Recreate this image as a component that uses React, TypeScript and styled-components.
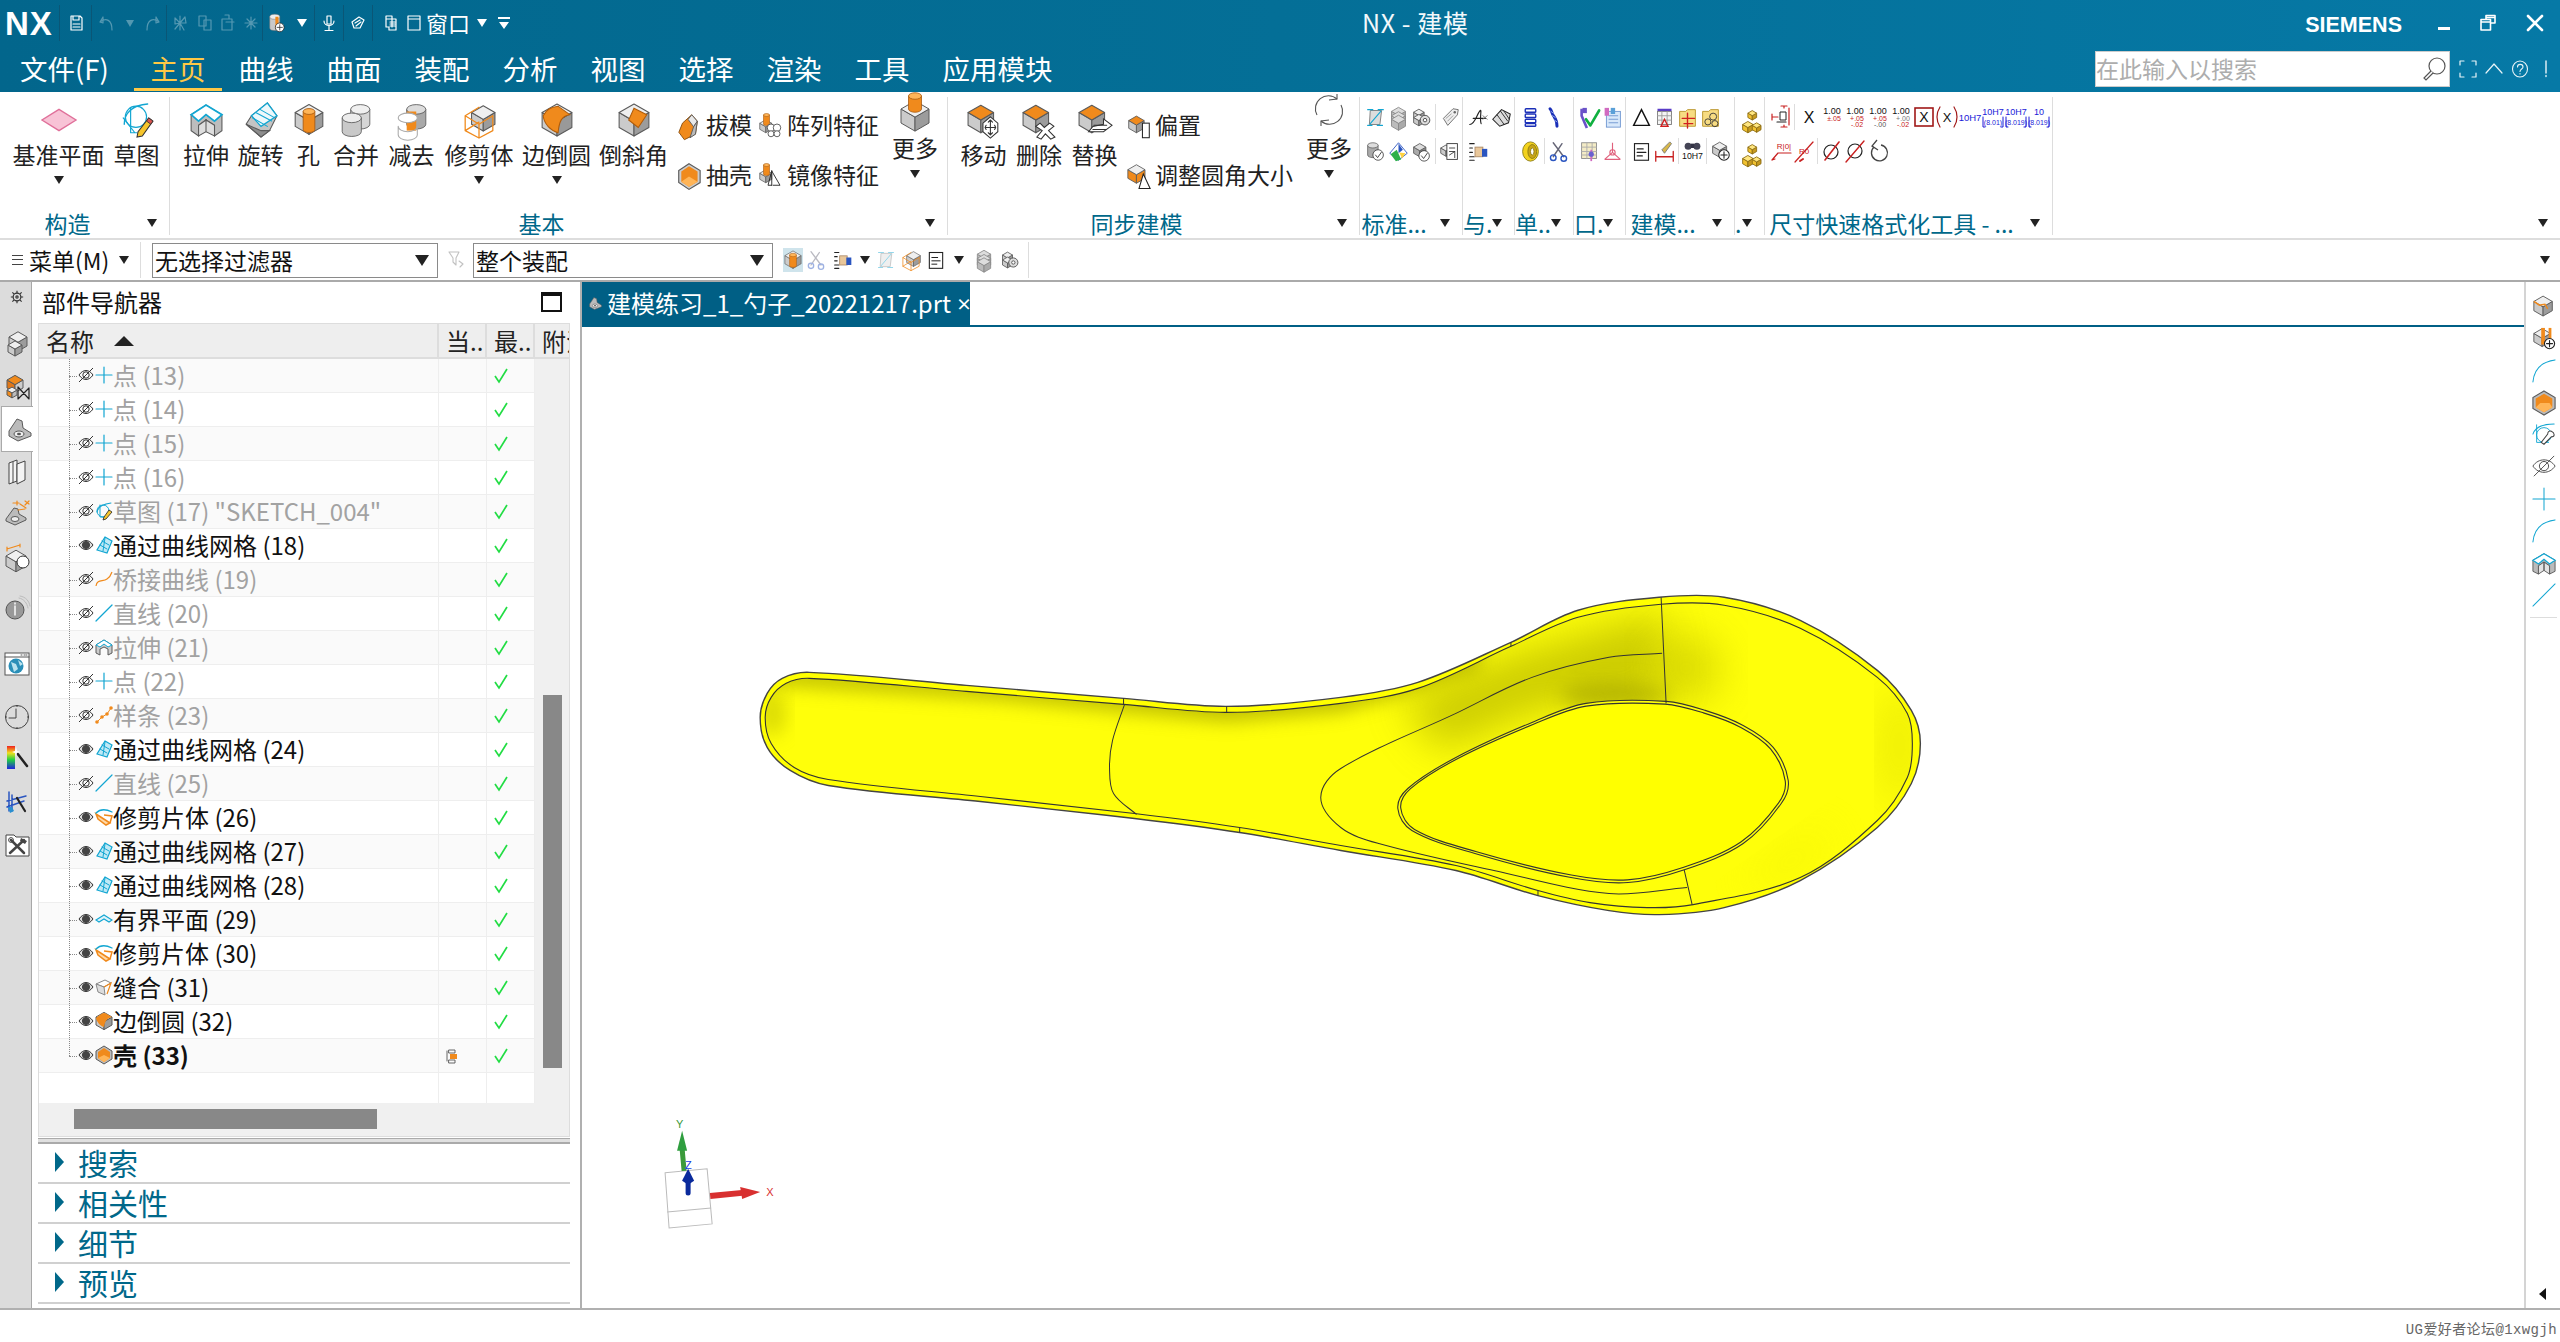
import React from 'react';
import styled, { createGlobalStyle } from 'styled-components';

const CJK = `"Noto Sans CJK SC", "Noto Sans", sans-serif`;
const TEAL = '#00688a';

const Global = createGlobalStyle`
  html, body { margin: 0; padding: 0; background: #fff; overflow: hidden; }
  body { font-family: ${CJK}; }
  * { box-sizing: border-box; }
`;

/* ---------- drawing helpers ---------- */
const O = '#f08a1c', OL = '#ffb558', G1 = '#efefef', G2 = '#cbcbcb', G3 = '#9c9c9c', ST = '#5a5a5a', CY = '#12a6d2';

const cube = (cx: number, cy: number, r: number, t = G1, l = G2, rt = G3, st = ST) => {
  const h = r * 0.58, b = r;
  return (
    <g stroke={st} strokeWidth={1} strokeLinejoin="round">
      <polygon points={`${cx - r},${cy} ${cx},${cy + h} ${cx},${cy + h + b} ${cx - r},${cy + b}`} fill={l} />
      <polygon points={`${cx + r},${cy} ${cx},${cy + h} ${cx},${cy + h + b} ${cx + r},${cy + b}`} fill={rt} />
      <polygon points={`${cx},${cy - h} ${cx + r},${cy} ${cx},${cy + h} ${cx - r},${cy}`} fill={t} />
    </g>
  );
};
const cyl = (cx: number, top: number, bot: number, rx: number, fill = O, cap = OL, st = '#a85a10') => (
  <g stroke={st} strokeWidth={0.8}>
    <path d={`M${cx - rx} ${top} V${bot} A${rx} ${rx * 0.5} 0 0 0 ${cx + rx} ${bot} V${top}Z`} fill={fill} />
    <ellipse cx={cx} cy={top} rx={rx} ry={rx * 0.5} fill={cap} />
  </g>
);
const line = (d: string, c = ST, w = 1) => <path d={d} fill="none" stroke={c} strokeWidth={w} strokeLinecap="round" strokeLinejoin="round" />;
const pencil = (
  <g>
    <polygon points="27,14 31,17 21,31 16,32 17,27" fill="#f6c52c" stroke="#333" strokeWidth={1} />
    <polygon points="27,14 31,17 29,20 25,17" fill="#d9534f" stroke="#333" strokeWidth={0.8} />
  </g>
);
const plus = (cx: number, cy: number, r: number) => (
  <g>
    <circle cx={cx} cy={cy} r={r} fill="#fff" stroke="#222" strokeWidth={1.2} />
    {line(`M${cx - r * 0.6} ${cy}H${cx + r * 0.6}M${cx} ${cy - r * 0.6}V${cy + r * 0.6}`, '#222', 1.2)}
  </g>
);
const check = (cx: number, cy: number, r: number) => (
  <g>
    <circle cx={cx} cy={cy} r={r} fill="#fff" stroke="#333" strokeWidth={0.9} />
    {line(`M${cx - r * 0.5} ${cy}L${cx - r * 0.1} ${cy + r * 0.5}L${cx + r * 0.6} ${cy - r * 0.5}`, '#333', 1)}
  </g>
);
const gold = (
  <g>
    {cube(9, 20, 6, '#ffe680', '#f2c230', '#c79a20', '#8a6a10')}
    {cube(19, 21, 5, '#ffe680', '#f2c230', '#c79a20', '#8a6a10')}
    {cube(14, 7, 5, '#ffe680', '#f2c230', '#c79a20', '#8a6a10')}
  </g>
);
const folder = (extra: React.ReactNode) => (
  <g>
    <path d="M3 5H10L12 3H21V22H3Z" fill="#f7dc82" stroke="#b58f20" />
    {extra}
  </g>
);
const dimText = (a: string, b: string, c: string, d?: string, e?: string) => (
  <g fontFamily="Liberation Sans, sans-serif" fontSize={8} textAnchor="middle">
    <text x={12} y={9} fill="#111" fontSize={9}>{a}</text>
    <text x={14} y={16} fill={c} fontSize={7}>{b}</text>
    {d && <text x={14} y={22} fill={e || c} fontSize={7}>{d}</text>}
  </g>
);
const blueText = (a: string, b: string) => (
  <g fontFamily="Liberation Sans, sans-serif" textAnchor="middle" fill="#1a1ad8">
    <text x={12} y={10} fontSize={9}>{a}</text>
    <text x={12} y={20} fontSize={7}>{b}</text>
    {line('M2 12V22H4M22 12V22H20', '#1a1ad8', 1)}
  </g>
);

/* large icons, 32 box */
const L: Record<string, React.ReactNode> = {
  datum: <polygon points="16,6 32,16 16,26 0,16" fill="#f8c3d6" stroke="#e0709a" strokeWidth={1.3} />,
  sketch: (
    <g>
      {line('M4 20C4 9 12 2 26 1', CY, 1.3)}
      <circle cx={15} cy={13} r={10} fill="none" stroke={CY} strokeWidth={1.1} />
      {line('M3 14L14 28M10 5V28H16', CY, 1.1)}
      {pencil}
    </g>
  ),
  extrude: (
    <g stroke={ST}>
      <path d="M2 11L16 2L31 11V26L24 31V21L16 16L9 21V31L2 26Z" fill="#bdbdbd" />
      <path d="M9 21V31L16 27V16ZM24 21V31L16 27V16Z" fill="#dedede" />
      <path d="M2 11L16 2L31 11L24 17L16 11L9 17Z" fill="#fff" stroke={CY} strokeWidth={1.6} />
    </g>
  ),
  revolve: (
    <g>
      <path d="M7 12L22 0L31 12L24 26L16 32L2 20Z" fill="#c4c4c4" stroke={ST} />
      <path d="M7 12L22 0L31 12L16 22Z" fill="#eef8fb" stroke={CY} strokeWidth={1.2} />
      {line('M11 9L26 17M15 6L29 14M8 14L22 22', CY, 1)}
      <path d="M2 20L16 26L24 26L16 32Z" fill="#8d8d8d" stroke={ST} />
    </g>
  ),
  hole: <g>{cube(16, 9, 13)}{cyl(16, 8, 25, 5.5)}</g>,
  unite: (
    <g>
      {cyl(20, 6, 20, 9, '#d5d5d5', '#f0f0f0', ST)}
      {cyl(12, 14, 27, 9, '#c9c9c9', '#ececec', ST)}
    </g>
  ),
  subtract: (
    <g>
      {cyl(20, 6, 20, 9, '#a9a9a9', '#dcdcdc', ST)}
      <path d="M11 8H20V26H11Z" fill={O} />
      {line('M3 22A9 5 0 0 0 21 22V30A9 5 0 0 1 3 30Z', '#aaa', 1)}
      <ellipse cx={12} cy={14} rx={9} ry={4.5} fill="#fff" stroke="#aaa" />
    </g>
  ),
  trim: (
    <g>
      {cube(20, 9, 11)}
      {line('M16 4L3 12L16 20L29 12M3 12V26L16 33L29 26V12M16 20V33M3 26L16 18', O, 1.2)}
    </g>
  ),
  blend: (
    <g>
      {cube(16, 9, 14, G1, '#ccc', '#999')}
      <path d="M3 12C6 6 10 4 17 3L28 11C20 12 18 18 17 28C10 26 4 20 3 12Z" fill={O} stroke="#b05c0a" />
    </g>
  ),
  chamfer: (
    <g>
      {cube(16, 9, 14)}
      <polygon points="16,5 28,11 20,23 11,16" fill={O} stroke="#b05c0a" />
    </g>
  ),
  draftS: (
    <g>
      <polygon points="6,12 16,3 22,10 20,24 8,30 2,22" fill={O} stroke="#8a4f10" />
      <polygon points="12,8 16,3 22,10 18,16" fill="#e8e8e8" stroke={ST} />
      <polygon points="18,16 22,10 20,24 14,28" fill="#bbb" stroke={ST} />
    </g>
  ),
  patternS: (
    <g>
      {cube(9, 15, 8)}
      {cyl(10, 4, 16, 4)}
      <g fill="#fff" stroke="#444" strokeWidth={1.1}>
        <circle cx={16} cy={21} r={5} /><circle cx={24} cy={21} r={5} /><circle cx={16} cy={29} r={4} /><circle cx={24} cy={29} r={4} />
      </g>
    </g>
  ),
  shellS: (
    <g>
      <polygon points="14,2 27,10 27,24 14,32 2,24 2,10" fill="#ccc" stroke={ST} strokeWidth={1.3} />
      <polygon points="14,5 24,11 24,23 14,29 5,23 5,11" fill={O} />
      <polygon points="5,23 14,17 24,23 14,29" fill={OL} />
    </g>
  ),
  mirrorS: (
    <g>
      {cube(9, 15, 8)}
      {cyl(10, 4, 16, 4)}
      {line('M17 12V31M17 12L12 31H17M17 12L28 31H19', '#222', 1.2)}
    </g>
  ),
  more: <g>{cube(16, 15, 14)}{cyl(16, 2, 15, 6.5)}</g>,
  move: (
    <g>
      {cube(13, 9, 12, O, G2, G3)}
      <g transform="translate(22 23)">
        <polygon points="0,-10 7,-4 7,4 0,10 -7,4 -7,-4" fill="#fff" stroke="#333" />
        {line('M0 -7V7M-5 0H5M-2 -5L0 -7L2 -5M-2 5L0 7L2 5M-4 -2L-5 0L-4 2M4 -2L5 0L4 2', '#333', 1)}
      </g>
    </g>
  ),
  del: (
    <g>
      {cube(13, 9, 12, O, G2, G3)}
      <polygon points="13,22 17,19 21,23 26,19 30,22 25,26 31,32 27,34 22,29 18,34 14,32 19,26" fill="#fff" stroke="#333" />
    </g>
  ),
  replace: (
    <g>
      {cube(13, 9, 12, O, G2, G3)}
      <polygon points="24,15 32,21 24,27 10,27 14,22 24,20" fill="#fff" stroke="#333" />
      {line('M14 25H26M15 21H27', '#333', 1)}
    </g>
  ),
  offsetS: (
    <g>
      {cube(11, 10, 9, O, G2, G3)}
      <rect x={18} y={13} width={8} height={17} fill="#fff" stroke="#222" strokeWidth={1.2} />
    </g>
  ),
  resizeS: (
    <g>
      {cube(11, 9, 10, G1, O, O)}
      <polygon points="19,14 27,31 14,31" fill="#fff" stroke="#222" strokeWidth={1.2} />
    </g>
  ),
  refresh: (
    <g fill="none" stroke="#555" strokeWidth={1.1}>
      <path d="M4 21A13 13 0 0 1 24 5M28 11A13 13 0 0 1 8 27" />
      <path d="M16 6L24 5L24 0M16 26L8 27L8 32" />
    </g>
  ),
};

/* tiny icons, 24 box */
const T: Record<string, React.ReactNode> = {
  a: <g><path d="M6 4L19 4L17 20L5 20Z" fill="#ddd" stroke="#777" />{line('M3 3L9 3M15 3L21 3M3 21L8 21M14 21L20 21M6 19L18 5', CY, 1.2)}</g>,
  b: <g>{cube(12, 5, 8, '#ddd', '#bbb', '#aaa', '#888')}{cube(12, 10, 8, '#ddd', '#bbb', '#aaa', '#888')}{cube(12, 14, 8, '#ddd', '#bbb', '#aaa', '#888')}</g>,
  c: <g>{cube(9, 6, 6)}{cube(9, 12, 6)}<circle cx={16} cy={15} r={5.5} fill="#ddd" stroke="#444" /><circle cx={16} cy={15} r={2} fill="#fff" stroke="#444" /></g>,
  d: <g><polygon points="5,13 16,2 22,3 21,9 10,21" fill="#eee" stroke="#666" /><circle cx={18} cy={6} r={1.4} fill="#666" />{line('M8 13L14 8M10 16L16 10', '#999')}</g>,
  e: <g>{cyl(9, 5, 16, 6, '#aaa', '#ddd', '#555')}{check(15, 16, 6)}</g>,
  f: <g><polygon points="12,2 22,14 12,22 2,14" fill="#fff" stroke="#2a55c0" /><polygon points="3,15 10,10 15,21 9,23" fill="#2eb04a" /><polygon points="12,3 17,10 12,14" fill="#2a55c0" /><polygon points="13,13 20,14 16,20" fill="#ffd23f" /></g>,
  g: <g>{cube(10, 7, 7, '#ddd', '#aaa', '#888')}{check(15, 17, 6)}</g>,
  h: <g>{cube(8, 8, 6)}<rect x={9} y={3} width={12} height={18} fill="#fff" stroke="#333" />{line('M12 8H18M12 12H18M12 16L18 12V19', '#333')}</g>,
  i: <g>{line('M2 20C8 20 10 8 14 4C16 2 13 14 15 19M6 13H20', '#222', 1.3)}{line('M17 10L22 14M17 14L22 10', '#777')}</g>,
  j: <g><polygon points="2,14 12,3 22,8 20,18 10,22" fill="#ddd" stroke="#222" strokeWidth={1.2} />{line('M7 9L15 20M11 5L19 16M15 5L21 14', '#222')}</g>,
  k: <g>{line('M2 3H7M2 8H5M2 13H5M2 18H7M2 22H7', '#222', 1.4)}<rect x={8} y={7} width={9} height={11} fill="#e9c79a" stroke="#a86" /><rect x={16} y={9} width={6} height={9} fill="#2a55c0" /></g>,
  l: <g fill="#fff" stroke="#1a2fb8" strokeWidth={1.6}><rect x={6} y={2} width={12} height={4} rx={1} /><rect x={6} y={8} width={12} height={4} rx={1} /><rect x={6} y={14} width={12} height={4} rx={1} /><rect x={6} y={19} width={12} height={3} rx={1} /></g>,
  m: <g>{line('M8 2C10 4 10 7 12 10C14 13 16 15 16 22', '#1a2fb8', 3.4)}{line('M9 5L12 7M11 10L14 12M13 15L16 17', '#9fb4f0', 1)}</g>,
  n: <g><ellipse cx={12} cy={12} rx={9} ry={11} fill="#f3d21d" stroke="#8a7a10" /><ellipse cx={14} cy={12} rx={5} ry={8} fill="#c7a418" stroke="#8a7a10" /><ellipse cx={14} cy={12} rx={2} ry={4} fill="#fff" stroke="#8a7a10" /></g>,
  o: <g>{line('M6 2L18 18M16 3L6 18', '#667', 1.6)}<circle cx={6} cy={19} r={3.2} fill="none" stroke="#2a55c0" strokeWidth={1.6} /><circle cx={18} cy={20} r={3.2} fill="none" stroke="#2a55c0" strokeWidth={1.6} /></g>,
  p: <g><path d="M3 2V10L9 24" fill="none" stroke="#6a52c8" strokeWidth={3} />{line('M8 14L13 21L23 4', '#10b040', 3)}<rect x={4} y={1} width={5} height={6} fill="#6a52c8" /></g>,
  q: <g><rect x={5} y={5} width={16} height={18} fill="#d8e8fa" stroke="#6b93d0" />{line('M8 10H18M8 14H18M8 18H18', '#6b93d0')}<rect x={3} y={1} width={5} height={9} fill="#d06ac0" /><rect x={10} y={1} width={5} height={7} fill="#5aa0d8" /></g>,
  r: <g><rect x={3} y={2} width={17} height={18} fill="#f4ecc6" stroke="#888" />{line('M3 7H20M3 12H20M3 16H20M9 2V20M15 2V20', '#aaa')}<path d="M14 10V23" stroke="#d06ac0" strokeWidth={2} /><circle cx={14} cy={15} r={3} fill="#6a62d0" /></g>,
  s: <g fill="none" stroke="#e0607c" strokeWidth={1.3}><path d="M12 2V13M12 13L3 21M12 13L21 21M3 21H21" /><circle cx={12} cy={13} r={3} /></g>,
  t: <polygon points="12,3 21,21 3,21" fill="#fff" stroke="#111" strokeWidth={1.6} />,
  u: <g><rect x={4} y={2} width={16} height={3} fill="#5a3cc8" /><rect x={4} y={5} width={16} height={15} fill="#f5f5f5" stroke="#777" />{line('M4 10H20M4 15H20M9 5V20M15 5V20', '#999')}<polygon points="12,14 16,22 8,22" fill="none" stroke="#d02020" strokeWidth={1.6} /></g>,
  v: folder(<g>{line('M12 7V24M6 13H20M8 19H18', '#d02020', 1.6)}</g>),
  w: folder(<g fill="none" stroke="#333"><circle cx={15} cy={11} r={4} /><circle cx={9} cy={17} r={3.5} /><circle cx={17} cy={19} r={3.5} /></g>),
  x: <g><rect x={4} y={3} width={16} height={19} fill="#fff" stroke="#222" strokeWidth={1.3} />{line('M7 9H14M7 13H17M7 17H13', '#222', 1.2)}</g>,
  y: <g>{line('M2 12V23M22 12V23M2 18H22', '#c82020', 1.5)}<polygon points="9,10 18,1 20,3 12,14" fill="#d8b84a" stroke="#777" /></g>,
  z: <g><circle cx={7} cy={6} r={4} fill="#445" /><circle cx={17} cy={6} r={4} fill="#445" /><rect x={10} y={3} width={4} height={5} fill="#334" /><text x={12} y={21} fontSize={10} textAnchor="middle" fontFamily="Liberation Sans" fill="#111">10H7</text></g>,
  aa: <g>{cube(11, 6, 8)}{plus(16, 16, 6)}</g>,
  gold,
  d1: <g>{line('M12 1H18M15 1V3M12 22H18M15 20V22', '#c82020', 1.2)}<path d="M11 15V7H17V15Z" fill="#fff" stroke="#222" />{line('M3 9V15M3 12H9M20 3V20', '#c82020', 1.2)}{line('M8 17H17', '#222', 1.2)}</g>,
  d2: <text x={12} y={18} fontSize={16} textAnchor="middle" fontFamily="Liberation Sans" fill="#111">X</text>,
  d3: dimText('1.00', '±.05', '#c82020'),
  d4: dimText('1.00', '+.05', '#c82020', '-.02'),
  d5: dimText('1.00', '+.05', '#c82020', '-.00', '#555'),
  d6: dimText('1.00', '+.00', '#777', '-.02', '#c82020'),
  d7: <g><rect x={3} y={3} width={18} height={18} fill="#fff" stroke="#a01818" strokeWidth={1.6} /><text x={12} y={17} fontSize={14} textAnchor="middle" fontFamily="Liberation Sans" fill="#111">X</text></g>,
  d8: <g><text x={12} y={17} fontSize={13} textAnchor="middle" fontFamily="Liberation Sans" fill="#111">X</text>{line('M5 2C1 8 1 16 5 22', '#a01818', 1.2)}{line('M19 2C23 8 23 16 19 22', '#a01818', 1.2)}</g>,
  d9: <text x={12} y={16} fontSize={9.5} textAnchor="middle" fontFamily="Liberation Sans" fill="#1a1ad8">10H7</text>,
  d10: blueText('10H7', '(8.01)'),
  d11: blueText('10H7', '(8.019)'),
  d12: blueText('10', '(8.019)'),
  d13: <g>{line('M3 21L9 14H22M3 21L6 20', '#c82020', 1.2)}<text x={15} y={10} fontSize={8} textAnchor="middle" fontFamily="Liberation Sans" fill="#c82020">R|0|</text></g>,
  d14: <g>{line('M3 23L21 3', '#c82020', 1.2)}<text x={12} y={15} fontSize={8} textAnchor="middle" fontFamily="Liberation Sans" fill="#c82020">R0</text>{line('M8 22L11 20', '#c82020', 2)}</g>,
  d15: <g><circle cx={11} cy={13} r={7} fill="none" stroke="#222" strokeWidth={1.2} />{line('M5 21L19 3', '#c82020', 1.6)}</g>,
  d16: <g><circle cx={12} cy={12} r={7} fill="none" stroke="#222" strokeWidth={1.2} />{line('M3 23L21 2', '#c82020', 1.4)}</g>,
  d17: <g fill="none" stroke="#444" strokeWidth={1.3}><path d="M8 8A8 8 0 1 0 15 6" /><path d="M11 1L6 7L12 11" /></g>,
};

/* row icons, 18 box */
const R: Record<string, React.ReactNode> = {
  pt: line('M9 1V17M1 9H17', CY, 1.2),
  sk: <g>{line('M2 10C3 5 8 2 16 1', CY, 1.1)}<circle cx={8} cy={9} r={6} fill="none" stroke={CY} />{line('M5 3V15H10', CY)}<polygon points="14,8 17,10 11,17 8,18 9,15" fill="#f6c52c" stroke="#222" strokeWidth={0.8} /></g>,
  mesh: <g><polygon points="10,1 17,5 12,17 2,14" fill="#bfe9f6" stroke={CY} strokeWidth={1.2} />{line('M7 5L14 9M5 9L12 13M10 2L8 15', CY)}</g>,
  bridge: <path d="M1 16C2 9 8 12 12 9C15 7 16 5 17 2" fill="none" stroke={O} strokeWidth={1.2} />,
  line: line('M1 17L17 1', CY, 1.2),
  ext: <g stroke={ST}><path d="M1 7L9 2L17 7V15L13 17V11L9 9L5 11V17L1 15Z" fill="#ccc" /><path d="M1 7L9 2L17 7L13 9L9 6L5 9Z" fill="#fff" stroke={CY} /></g>,
  spline: <g>{line('M2 16L7 11L12 8L16 2', O, 1)}<g fill={O}><circle cx={2} cy={16} r={1.8} /><circle cx={7} cy={11} r={1.8} /><circle cx={12} cy={8} r={1.8} /><circle cx={16} cy={2} r={1.8} /></g></g>,
  trim: <g><path d="M1 6L15 15L11 17L3 11Z" fill="#ffd9a8" stroke={O} strokeWidth={1.5} />{line('M1 5C5 1 11 1 17 4', CY, 1.3)}<path d="M9 7L17 8L15 15" fill="none" stroke={O} strokeWidth={1.5} /></g>,
  plane: <path d="M1 10L9 5L17 10L14 12L9 9L4 12Z" fill="#dff3fa" stroke={CY} strokeWidth={1.1} />,
  sew: <g><polygon points="1,6 10,2 16,5 9,9" fill="#fff" stroke="#888" /><polygon points="1,6 9,9 10,17 3,14" fill="#ddd" stroke="#888" /><path d="M9 9L16 5L12 16" fill="none" stroke={O} strokeWidth={1.2} /></g>,
  blend: <g>{cube(9, 5, 8)}<path d="M1 6C4 3 7 1 10 1L17 5C12 6 10 9 9 15C5 14 2 10 1 6Z" fill={O} /></g>,
  shell: <g><polygon points="9,0 17,5 17,13 9,18 1,13 1,5" fill="#bbb" stroke={ST} /><polygon points="9,2 15,6 15,12 9,16 3,12 3,6" fill={O} /><polygon points="3,12 9,9 15,12 9,16" fill={OL} /></g>,
};
const eye = (hidden: boolean) => (
  <g fill="none" stroke="#333" strokeWidth={1}>
    <path d="M1 8C5 2 11 2 15 8C11 14 5 14 1 8Z" fill={hidden ? 'none' : '#ddd'} />
    {hidden ? <circle cx={8} cy={8} r={3.2} /> : <circle cx={8} cy={8} r={3.6} fill="#444" stroke="#444" />}
    {hidden && <path d="M1 15L15 1" />}
  </g>
);

/* strip icons, 26 box */
const S: Record<string, React.ReactNode> = {
  gear: <g fill="none" stroke="#333" strokeWidth={1.5}><circle cx={13} cy={13} r={5} /><circle cx={13} cy={13} r={1.5} /><path d="M13 5V8M13 18V21M5 13H8M18 13H21M7 7L9 9M17 17L19 19M19 7L17 9M7 19L9 17" /></g>,
  box: <g>{cube(14, 6, 9)}{cube(11, 14, 7)}</g>,
  asm: <g>{cube(11, 6, 8, O, '#e0781a', '#ccc')}{line('M14 13V25L25 14V25Z', '#222', 1.2)}{cube(8, 16, 5, G1, O, '#bbb')}</g>,
  part: <g><path d="M3 15L11 3L16 5L17 12L25 17V20L12 25L3 20Z" fill="#bbb" stroke={ST} /><ellipse cx={13} cy={18} rx={5} ry={3} fill="#eee" stroke={ST} /><ellipse cx={13} cy={18} rx={2} ry={1.2} fill="#555" /></g>,
  book: <g fill="#f4f4f4" stroke="#444"><path d="M5 4L13 1V22L5 25Z" /><path d="M13 5L21 2V21L13 25Z" /><path d="M9 3V24" /></g>,
  part2: <g><path d="M2 19L10 8L14 9L15 14L22 18V20L11 25L2 21Z" fill="#bbb" stroke={ST} /><ellipse cx={11} cy={19} rx={4} ry={2.5} fill="#eee" stroke={ST} />{line('M13 1V5M9 3H15M16 4L22 8M21 1L25 4M25 1L21 5M14 10L21 9', O, 1.2)}</g>,
  dim: <g>{cube(12, 12, 10)}<circle cx={19} cy={18} r={6} fill="#fff" stroke="#333" />{line('M3 5L16 1M3 3V7M16 0V3', O, 1.2)}</g>,
  info: <g><circle cx={11} cy={15} r={9} fill="#999" stroke="#555" />{line('M11 11V20M11 8V9', '#fff', 1.4)}{line('M15 3C20 4 23 8 24 13M16 1C22 2 25 6 26 11', '#bbb')}</g>,
  web: <g><rect x={1} y={3} width={24} height={22} fill="#fff" stroke="#555" />{line('M1 7H25M17 5H18M20 5H21M22 5H23', '#555')}<circle cx={12} cy={16} r={7.5} fill="#2a8fb8" /><path d="M7 12L12 14L14 19L10 22ZM14 10L19 14L16 16Z" fill="#b9e2ee" /></g>,
  clock: <g fill="none" stroke="#444" strokeWidth={1}><circle cx={13} cy={13} r={11.5} />{line('M12 5V14H5', '#444', 1)}<path d="M13 1V3M13 23V25M1 13H3M23 13H25" /></g>,
  color: <g><rect x={3} y={1} width={8} height={23} fill="url(#rb)" />{line('M13 8L23 21', '#222', 2.5)}<path d="M12 2L13 6L17 7L13 8L12 12L11 8L8 7L11 6Z" fill="#fff" /></g>,
  wave: <g>{line('M5 3V22M8 6V22M3 12L22 7M3 18L20 12', '#2a55c0', 1.5)}{line('M13 9L21 22', '#222', 2.2)}<path d="M4 18L6 24L10 22L8 18Z" fill="#2a8fd0" /></g>,
  tools: <g><path d="M2 4H10L12 6H25V25H2Z" fill="#fff" stroke="#444" />{line('M6 22L20 9M7 9L20 22', '#444', 2.5)}<path d="M17 7L23 10L21 13L16 10Z" fill="#444" /><circle cx={7} cy={9} r={2.4} fill="none" stroke="#444" /></g>,
  rSurf: <g>{cube(12, 7, 10)}<path d="M2 7L8 11L14 10L17 15" fill="none" stroke={O} strokeWidth={1.6} /></g>,
  rAdd: <g>{cube(11, 7, 9)}<rect x={10} y={1} width={4} height={18} fill={O} /><rect x={18} y={1} width={3} height={16} fill={O} />{plus(19, 18, 5.5)}</g>,
  rArc: line('M1 25C2 12 10 3 25 1', CY, 1.1),
  rShell: <g><polygon points="13,0 25,7 25,19 13,26 1,19 1,7" fill="#bbb" stroke={ST} strokeWidth={1.2} /><polygon points="13,3 22,8 22,18 13,23 4,18 4,8" fill={O} /><polygon points="4,18 9,13 19,13 22,18 13,23" fill={OL} /></g>,
  rFix: <g>{line('M1 12C3 6 10 1 24 1', CY, 1.1)}<circle cx={13} cy={13} r={8} fill="none" stroke={CY} />{line('M5 2V21H18', CY)}<path d="M21 9C25 11 25 15 21 15L13 23L10 21L17 12C17 9 19 8 21 9Z" fill="#fff" stroke="#444" strokeWidth={1.1} /></g>,
  rEye: <g fill="none" stroke="#444" strokeWidth={1}><path d="M1 12C7 3 19 3 25 12C19 21 7 21 1 12Z" /><circle cx={13} cy={12} r={5} /><path d="M2 23L24 1" /></g>,
  rPlus: line('M13 1V25M1 13H25', CY, 1.1),
  rExt: <g stroke={ST}><path d="M1 10L13 3L25 10V22L19 25V16L13 12L7 16V25L1 22Z" fill="#bbb" /><path d="M7 16V25L13 21V12ZM19 16V25L13 21V12Z" fill="#e4e4e4" /><path d="M1 10L13 3L25 10L19 14L13 9L7 14Z" fill="#fff" stroke={CY} strokeWidth={1.4} /></g>,
  rLine: line('M1 25L25 1', CY, 1.1),
};

const Art = ({ set, n, s, box }: { set: Record<string, React.ReactNode>; n: string; s: number; box: number }) => (
  <IconSvg $s={s} viewBox={`0 0 ${box} ${box}`}>{set[n]}</IconSvg>
);

/* ---------- spoon geometry ---------- */
type P = [number, number];
const seg = (a: P, b: P, c: P, e: P) => {
  const len = Math.hypot(c[0] - b[0], c[1] - b[1]);
  const t1 = Math.hypot(c[0] - a[0], c[1] - a[1]) || 1;
  const t2 = Math.hypot(e[0] - b[0], e[1] - b[1]) || 1;
  const k = len / 3;
  const c1x = b[0] + ((c[0] - a[0]) / t1) * k, c1y = b[1] + ((c[1] - a[1]) / t1) * k;
  const c2x = c[0] - ((e[0] - b[0]) / t2) * k, c2y = c[1] - ((e[1] - b[1]) / t2) * k;
  return `C${c1x.toFixed(1)} ${c1y.toFixed(1)} ${c2x.toFixed(1)} ${c2y.toFixed(1)} ${c[0]} ${c[1]}`;
};
const smooth = (p: P[]) => {
  const n = p.length;
  let d = `M${p[0][0]} ${p[0][1]}`;
  for (let i = 0; i < n; i++) d += seg(p[(i - 1 + n) % n], p[i], p[(i + 1) % n], p[(i + 2) % n]);
  return d + 'Z';
};
const openCurve = (p: P[]) => {
  let d = `M${p[0][0]} ${p[0][1]}`;
  for (let i = 0; i < p.length - 1; i++) d += seg(p[Math.max(i - 1, 0)], p[i], p[i + 1], p[Math.min(i + 2, p.length - 1)]);
  return d;
};
const OUTER: P[] = [[760, 717], [767, 693], [782, 678], [809, 672], [966, 685], [1123, 698], [1226, 706], [1340, 697], [1417, 682], [1510, 642], [1577, 610], [1658, 597], [1723, 597], [1799, 620], [1876, 670], [1910, 710], [1919, 743], [1910, 783], [1876, 827], [1799, 880], [1723, 907], [1658, 914], [1608, 910], [1537, 895], [1455, 870], [1340, 850], [1239, 832], [1134, 818], [980, 801], [828, 785], [790, 770], [767, 747]];
const INNER: P[] = [[765, 717], [771, 697], [786, 683], [809, 678], [966, 691], [1123, 704], [1226, 712], [1340, 703], [1417, 688], [1510, 646], [1577, 617], [1660, 604], [1723, 605], [1799, 628], [1876, 677], [1906, 713], [1911, 743], [1906, 777], [1876, 820], [1799, 877], [1692, 904], [1646, 907], [1589, 902], [1537, 890], [1455, 865], [1340, 845], [1239, 827], [1134, 813], [980, 796], [828, 779], [794, 767], [771, 743]];
const PAD: P[] = [[1665, 701], [1585, 703], [1531, 722], [1455, 757], [1407, 788], [1397, 808], [1411, 830], [1474, 853], [1570, 877], [1627, 882], [1684, 869], [1742, 843], [1780, 803], [1787, 780], [1772, 747], [1742, 725], [1704, 710]];
const PAD2: P[] = PAD.map(([x, y]) => [+(1590 + (x - 1590) * 0.985).toFixed(1), +(792 + (y - 792) * 0.97).toFixed(1)] as P);

/* ---------- styled parts ---------- */
const Page = styled.div`
  width: 2560px; height: 1342px; display: flex; flex-direction: column; background: #fff; overflow: hidden; color: #111;
  font-family: ${CJK};
`;
const IconSvg = styled.svg<{ $s: number }>`
  width: ${p => p.$s}px; height: ${p => p.$s}px; display: block; flex: none; overflow: visible;
`;
const Down = styled.i<{ $w?: number; $c?: string }>`
  display: block; flex: none; width: 0; height: 0;
  border-left: ${p => (p.$w || 12) / 2}px solid transparent;
  border-right: ${p => (p.$w || 12) / 2}px solid transparent;
  border-top: ${p => Math.round((p.$w || 12) * 0.75)}px solid ${p => p.$c || '#222'};
`;
const Header = styled.header`
  height: 92px; background: linear-gradient(90deg, #02668c 0%, #046f97 50%, #0679a6 100%); color: #fff; flex: none;
`;
const TitleBar = styled.div`
  height: 46px; display: grid; grid-template-columns: 1362px auto 1fr; align-items: center;
`;
const Quick = styled.div`
  display: flex; align-items: center; padding-left: 5px; height: 46px;
`;
const Logo = styled.span`
  font: bold 33px/1 "Liberation Sans", sans-serif; width: 54px; letter-spacing: 1px;
`;
const QSep = styled.i`
  width: 1px; height: 36px; background: #0a5676; flex: none;
`;
const QCell = styled.span<{ $w: number; $dim?: boolean }>`
  width: ${p => p.$w}px; display: flex; justify-content: center; align-items: center; flex: none;
  opacity: ${p => (p.$dim ? 0.32 : 1)};
`;
const QText = styled.span`
  font-size: 22px; line-height: 1; width: 44px; flex: none; margin-top: -2px;
`;
const Title = styled.div`
  font-size: 25px; letter-spacing: 0.6px; line-height: 1; color: #f2f8fb; margin-top: -2px;
`;
const WinArea = styled.div`
  display: flex; justify-content: flex-end; align-items: center;
`;
const Brand = styled.span`
  font: bold 21.5px/1 "Liberation Sans", sans-serif; margin: 5px 20px 0 0;
`;
const WinBtn = styled.span<{ $w: number }>`
  width: ${p => p.$w}px; display: flex; justify-content: center;
`;
const MenuBar = styled.nav`
  height: 46px; display: flex; align-items: stretch;
`;
const FileTab = styled.span`
  width: 134px; padding-left: 20px; font-size: 27.5px; line-height: 46px; margin-top: -1px;
`;
const Tab = styled.span<{ $on?: boolean; $w?: number }>`
  width: ${p => p.$w || 88}px; text-align: center; font-size: 27.5px; line-height: 46px; margin-top: -1px; height: 46px;
  color: ${p => (p.$on ? '#ffc845' : '#fff')};
  border-bottom: 3px solid ${p => (p.$on ? '#ffc845' : 'transparent')};
`;
const SearchBox = styled.div`
  margin-left: auto; align-self: center; width: 355px; height: 36px; background: #fff; border: 1px solid #ccc;
  display: flex; align-items: center; justify-content: space-between; padding-right: 2px; margin-top: -1px;
  color: #adadad; font-size: 23px; line-height: 1;
`;
const HelpCell = styled.span<{ $first?: boolean }>`
  width: 26px; display: flex; justify-content: center; align-items: center; flex: none;
  margin-left: ${p => (p.$first ? 5 : 0)}px;
`;
const Ribbon = styled.section`
  height: 148px; display: flex; border-bottom: 2px solid #ddd; flex: none; padding-top: 5px;
`;
const Group = styled.div<{ $w?: number; $grow?: boolean; $noline?: boolean }>`
  flex: ${p => (p.$grow ? '1' : `0 0 ${p.$w}px`)}; height: 138px; display: flex; flex-direction: column;
  border-right: ${p => (p.$noline ? 0 : '1px solid #ddd')};
  min-width: 0;
`;
const GroupBody = styled.div<{ $pl: number }>`
  flex: 1; display: flex; gap: 10px; padding: 6px 0 0 ${p => p.$pl}px; min-height: 0;
`;
const GroupFoot = styled.div`
  height: 26px; display: flex; align-items: center; flex: none; padding-top: 2px;
`;
const GroupName = styled.span<{ $tight?: boolean }>`
  flex: 1; min-width: 0; text-align: center; font-size: 23px; line-height: 34px; color: ${TEAL}; white-space: nowrap;
  overflow: ${p => (p.$tight ? 'visible' : 'hidden')};
  margin-right: ${p => (p.$tight ? -10 : 0)}px;
`;
const FootArrow = styled.span`
  width: 34px; display: flex; justify-content: center; flex: none;
`;
const Big = styled.div<{ $w: number }>`
  width: ${p => p.$w}px; display: flex; flex-direction: column; align-items: center; flex: none;
`;
const IconBox = styled.div`
  height: 34px; display: flex; justify-content: center; align-items: flex-start;
`;
const BigLabel = styled.span`
  font-size: 23px; line-height: 23px; margin-top: 6px; white-space: nowrap; color: #222;
`;
const BigCaret = styled.span`
  margin-top: 10px;
`;
const MoreBtn = styled(Big)`
  margin-top: -9px;
`;
const MoreLabel = styled(BigLabel)`
  margin-top: 8px;
`;
const MoreCaret = styled.span`
  margin-top: 11px;
`;
const SmallCol = styled.div<{ $ml?: number }>`
  display: flex; flex-direction: column; margin: -4px 0 0 ${p => p.$ml || 0}px; flex: none;
`;
const SmallBtn = styled.div<{ $gap: number }>`
  height: 50px; display: flex; align-items: center; gap: ${p => p.$gap}px; font-size: 23px; line-height: 1; white-space: nowrap; color: #222;
`;
const TinyGrid = styled.div`
  display: flex; flex-direction: column; padding: 3px 0 0 4px;
`;
const TinyRow = styled.div`
  height: 34px; display: flex; align-items: center;
`;
const TinyCell = styled.span`
  width: 23px; display: flex; justify-content: center; flex: none;
`;
const TinySep = styled.i`
  width: 5px; height: 26px; flex: none; display: flex; justify-content: center;
  &::before { content: ""; width: 1px; background: #ddd; }
`;
const FilterBar = styled.section`
  height: 42px; display: flex; align-items: center; padding-left: 12px; border-bottom: 2px solid #aaa; flex: none; position: relative;
`;
const Burger = styled.i`
  width: 11px; height: 10px; margin-right: 6px; flex: none;
  border-top: 1px solid #444; border-bottom: 1px solid #444; position: relative;
  &::after { content: ""; position: absolute; left: 0; right: 0; top: 3px; height: 1px; background: #444; }
`;
const FilterText = styled.span`
  font-size: 23px; line-height: 1; width: 84px; flex: none; white-space: nowrap;
`;
const Gap = styled.i<{ $w: number; $h?: number }>`
  width: ${p => p.$w}px; height: ${p => p.$h || 0}px; flex: none;
`;
const FilterSep = styled.i`
  width: 1px; height: 36px; background: #ddd; flex: none;
`;
const Select = styled.div<{ $w: number }>`
  width: ${p => p.$w}px; height: 35px; border: 1px solid #8a8a8a; flex: none; background: #fff;
  display: flex; align-items: center; justify-content: space-between; padding: 0 8px 0 2px; font-size: 23px; line-height: 1;
`;
const FIcon = styled.span<{ $w: number; $on?: boolean; $dim?: boolean }>`
  width: ${p => p.$w}px; height: 24px; display: flex; justify-content: center; align-items: center; flex: none;
  background: ${p => (p.$on ? '#cfe4ec' : 'transparent')};
  opacity: ${p => (p.$dim ? 0.45 : 1)};
`;
const TailArrow = styled.span`
  margin-left: auto; width: 30px; display: flex; justify-content: center;
`;
const Main = styled.main`
  flex: none; height: 1028px; display: flex; border-bottom: 2px solid #b0b0b0;
`;
const LeftStrip = styled.aside`
  width: 32px; flex: none; background: #dcdcdc; border-right: 1px solid #a8a8a8; display: flex; flex-direction: column; align-items: center;
`;
const StripItem = styled.div<{ $h: number; $on?: boolean; $pb?: number }>`
  height: ${p => p.$h}px; width: ${p => (p.$on ? 32 : 31)}px; display: flex; justify-content: center; align-items: center; flex: none;
  padding-left: ${p => (p.$on ? 3 : 2)}px; padding-bottom: ${p => p.$pb || 0}px;
  background: ${p => (p.$on ? '#fff' : 'transparent')};
  ${p => (p.$on ? 'border: 1px solid #aaa; border-right: 0; margin-left: 2px;' : '')}
`;
const Panel = styled.aside`
  width: 548px; flex: none; display: flex; flex-direction: column; padding: 0 0 0 6px;
`;
const PanelHead = styled.div`
  height: 41px; display: flex; align-items: center; justify-content: space-between; padding: 0 8px 2px 4px; flex: none; font-size: 24px; line-height: 1; width: 532px;
`;
const MaxBtn = styled.i`
  width: 21px; height: 20px; border: 2px solid #111; border-top-width: 4px; flex: none;
`;
const Table = styled.div`
  width: 532px; height: 814px; border: 1px solid #ddd; background: #f0f0f0; display: flex; flex-direction: column; flex: none;
`;
const ColHead = styled.div`
  height: 35px; display: grid; grid-template-columns: 400px 48px 48px 34px; background: #eee; border-bottom: 2px solid #ddd; flex: none;
`;
const HeadCell = styled.div<{ $pl: number }>`
  display: flex; align-items: center; gap: 20px; padding-left: ${p => p.$pl}px; font-size: 24px; line-height: 1; border-right: 2px solid #ddd;
  overflow: hidden; white-space: nowrap; color: #222;
  &:last-child { border-right: 0; }
`;
const UpTri = styled.i`
  width: 0; height: 0; border-left: 10px solid transparent; border-right: 10px solid transparent; border-bottom: 10px solid #222; flex: none;
`;
const TBody = styled.div`
  flex: 1; display: flex; min-height: 0;
`;
const RowsCol = styled.div`
  width: 496px; flex: none; background: #fff; height: 744px; border-bottom-right-radius: 3px;
`;
const Row = styled.div<{ $alt: boolean }>`
  height: 34px; display: grid; grid-template-columns: 400px 48px 48px; background: ${p => (p.$alt ? '#fafafa' : '#fff')}; border-bottom: 1px solid #eee;
`;
const NameCell = styled.div<{ $hid: boolean; $bold?: boolean; $last?: boolean }>`
  position: relative; display: flex; align-items: center; padding: 0 0 2px 39px; white-space: nowrap;
  font-size: 24px; line-height: 1; color: ${p => (p.$hid ? '#a2a2a2' : '#111')}; font-weight: ${p => (p.$bold ? 700 : 400)};
  border-right: 1px solid #eee;
  &::before { content: ""; position: absolute; left: 30px; top: 0; height: ${p => (p.$last ? '50%' : '100%')}; border-left: 1px dotted #888; }
  &::after { content: ""; position: absolute; left: 30px; top: 50%; width: 8px; border-top: 1px dotted #888; }
`;
const EyeSvg = styled.svg`
  width: 16px; height: 16px; flex: none; margin-right: 1px;
`;
const RowIcon = styled.span`
  width: 18px; display: flex; justify-content: center; flex: none;
`;
const MidCell = styled.div`
  display: flex; align-items: center; padding-left: 6px; border-right: 1px solid #eee;
`;
const BlankRow = styled.div`
  height: 30px; display: grid; grid-template-columns: 400px 48px 48px; background: #fff;
  & > i { border-right: 1px solid #eee; }
`;
const VTrack = styled.div`
  flex: 1; position: relative;
`;
const VThumb = styled.div`
  position: absolute; left: 8px; top: 336px; width: 19px; height: 373px; background: #888;
`;
const HTrack = styled.div`
  height: 33px; flex: none; position: relative;
`;
const HThumb = styled.div`
  position: absolute; left: 35px; top: 6px; width: 303px; height: 20px; background: #888;
`;
const Splitter = styled.div`
  width: 532px; height: 6px; flex: none; background: #e0e0e0; border-top: 1px solid #aaa; border-bottom: 2px solid #aaa; margin-top: 1px;
`;
const Section = styled.div`
  width: 532px; height: 40px; display: flex; align-items: center; border-bottom: 2px solid #d0d0d0; flex: none; padding: 0 0 2px 17px; gap: 14px;
  font-size: 30px; line-height: 1; color: ${TEAL};
`;
const Chevron = styled.i`
  width: 0; height: 0; border-top: 10px solid transparent; border-bottom: 10px solid transparent; border-left: 9px solid ${TEAL}; flex: none;
`;
const Center = styled.div`
  flex: 1; min-width: 0; display: flex; flex-direction: column; border-left: 2px solid #b0b0b0;
`;
const DocBar = styled.div`
  height: 45px; border-bottom: 2px solid #005f85; display: flex; flex: none;
`;
const DocTab = styled.div`
  width: 388px; height: 44px; background: #005f85; color: #fff; display: flex; align-items: center; padding: 0 0 2px 6px; gap: 5px;
  font-size: 24px; line-height: 1; white-space: nowrap;
`;
const DocClose = styled.span`
  font-size: 16px; margin-left: auto; padding-right: 10px; font-weight: 700;
`;
const Canvas = styled.svg`
  flex: 1; width: 100%; min-height: 0; display: block;
`;
const RightStrip = styled.aside`
  width: 36px; flex: none; border-left: 2px solid #d4d4d4; display: flex; flex-direction: column; align-items: center; padding-top: 9px;
`;
const RightItem = styled.div`
  height: 32px; display: flex; align-items: center; justify-content: center; flex: none; width: 100%; padding-left: 1px;
`;
const RightFill = styled.div`
  flex: 1;
`;
const RightRule = styled.i`
  width: 27px; height: 1px; background: #ddd; margin-top: 6px; flex: none;
`;
const LeftTri = styled.i`
  width: 0; height: 0; border-top: 6px solid transparent; border-bottom: 6px solid transparent; border-right: 7px solid #111; margin: 0 0 8px -2px; flex: none;
`;
const Status = styled.footer`
  flex: 1; display: flex; justify-content: flex-end; align-items: center; padding: 8px 3px 0 0;
  font: 14px/1 "Liberation Mono", "Noto Sans CJK SC", monospace; color: #666; letter-spacing: 0.4px;
`;

/* ---------- data ---------- */
type Tiny = string | null;
const tiny: { w: number; rows: Tiny[][]; name: string; tight?: boolean }[] = [
  { w: 103, name: '标准...', rows: [['a', 'b', 'c', null, 'd'], ['e', 'f', 'g', null, 'h']] },
  { w: 52, name: '与.', tight: true, rows: [['i', 'j'], ['k']] },
  { w: 59, name: '单..', tight: true, rows: [['l', 'm'], ['n', null, 'o']] },
  { w: 52, name: '口.', tight: true, rows: [['p', 'q'], ['r', 's']] },
  { w: 109, name: '建模...', rows: [['t', 'u', 'v', 'w'], ['x', 'y', null, 'z', null, 'aa']] },
  { w: 30, name: '.', tight: true, rows: [['gold'], ['gold']] },
  { w: 288, name: '尺寸快速格式化工具 - ...', rows: [['d1', null, 'd2', 'd3', 'd4', 'd5', 'd6', 'd7', 'd8', 'd9', 'd10', 'd11', 'd12'], ['d13', 'd14', null, 'd15', 'd16', 'd17']] },
];
const rows: { t: string; h: boolean; i: string; b?: boolean }[] = [
  { t: '点 (13)', h: true, i: 'pt' }, { t: '点 (14)', h: true, i: 'pt' }, { t: '点 (15)', h: true, i: 'pt' }, { t: '点 (16)', h: true, i: 'pt' },
  { t: '草图 (17) "SKETCH_004"', h: true, i: 'sk' }, { t: '通过曲线网格 (18)', h: false, i: 'mesh' }, { t: '桥接曲线 (19)', h: true, i: 'bridge' },
  { t: '直线 (20)', h: true, i: 'line' }, { t: '拉伸 (21)', h: true, i: 'ext' }, { t: '点 (22)', h: true, i: 'pt' }, { t: '样条 (23)', h: true, i: 'spline' },
  { t: '通过曲线网格 (24)', h: false, i: 'mesh' }, { t: '直线 (25)', h: true, i: 'line' }, { t: '修剪片体 (26)', h: false, i: 'trim' },
  { t: '通过曲线网格 (27)', h: false, i: 'mesh' }, { t: '通过曲线网格 (28)', h: false, i: 'mesh' }, { t: '有界平面 (29)', h: false, i: 'plane' },
  { t: '修剪片体 (30)', h: false, i: 'trim' }, { t: '缝合 (31)', h: false, i: 'sew' }, { t: '边倒圆 (32)', h: false, i: 'blend' }, { t: '壳 (33)', h: false, i: 'shell', b: true },
];
const strip: { n: string; h: number; on?: boolean; pb?: number }[] = [
  { n: 'gear', h: 30 }, { n: 'box', h: 64 }, { n: 'asm', h: 30, pb: 8 }, { n: 'part', h: 46, on: true }, { n: 'book', h: 40 }, { n: 'part2', h: 42 },
  { n: 'dim', h: 46 }, { n: 'info', h: 56 }, { n: 'web', h: 54 }, { n: 'clock', h: 54 }, { n: 'color', h: 28 }, { n: 'wave', h: 60 }, { n: 'tools', h: 24 },
];
const right = ['rSurf', 'rAdd', 'rArc', 'rShell', 'rFix', 'rEye', 'rPlus', 'rArc', 'rExt', 'rLine'];

const BigBtn = ({ w, icon, label, caret, s = 34 }: { w: number; icon: string; label: string; caret?: boolean; s?: number }) => (
  <Big $w={w}>
    <IconBox><Art set={L} n={icon} s={s} box={32} /></IconBox>
    <BigLabel>{label}</BigLabel>
    {caret && <BigCaret><Down $w={11} /></BigCaret>}
  </Big>
);
const More = ({ icon }: { icon: string }) => (
  <MoreBtn $w={52}>
    <IconBox><Art set={L} n={icon} s={32} box={32} /></IconBox>
    <MoreLabel>更多</MoreLabel>
    <MoreCaret><Down $w={11} /></MoreCaret>
  </MoreBtn>
);
const Small = ({ icon, label, s, gap, box = 32 }: { icon: string; label: string; s: number; gap: number; box?: number }) => (
  <SmallBtn $gap={gap}><Art set={L} n={icon} s={s} box={box} />{label}</SmallBtn>
);
const Foot = ({ name, tight }: { name?: string; tight?: boolean }) => (
  <GroupFoot>
    <GroupName $tight={tight}>{name}</GroupName>
    <FootArrow><Down $w={11} /></FootArrow>
  </GroupFoot>
);
const Tick = () => (
  <IconSvg $s={16} viewBox="0 0 16 16"><path d="M2 8L6 14L14 1" fill="none" stroke="#22dd44" strokeWidth={1.7} /></IconSvg>
);
const Q = ({ w, dim, d, c = '#fff' }: { w: number; dim?: boolean; d: string; c?: string }) => (
  <QCell $w={w} $dim={dim}>
    <IconSvg $s={18} viewBox="0 0 18 18">{line(d, c, 1.2)}</IconSvg>
  </QCell>
);
const Hz = ({ w, n, set = T, dim, on }: { w: number; n: string; set?: Record<string, React.ReactNode>; dim?: boolean; on?: boolean }) => (
  <FIcon $w={w} $dim={dim} $on={on}><Art set={set} n={n} s={20} box={set === T ? 24 : 32} /></FIcon>
);

export default function App() {
  return (
    <Page>
      <Global />
      <Header>
        <TitleBar>
          <Quick>
            <Logo>NX</Logo>
            <QSep />
            <Q w={31} d="M4 2H13L15 4V16H4ZM6 2V6H12V2M6 10H13M6 13H13" />
            <QSep />
            <Q w={27} dim d="M3 8L6 3V9L3 8C9 3 15 6 15 16" />
            <QCell $w={21} $dim><Down $w={9} $c="#fff" /></QCell>
            <Q w={26} dim d="M15 8L12 3V9L15 8C9 3 3 6 3 16" />
            <QSep />
            <Q w={26} dim d="M9 9L4 4L4 10L9 9L14 3L15 9L9 9L4 15M9 9L13 16M9 2V16" />
            <Q w={23} dim d="M3 2H10V12H3ZM8 6H15V16H8Z" />
            <Q w={23} dim d="M3 5H13V16H3ZM6 1H10V5M7 8H15" />
            <Q w={23} dim d="M3 9H15M9 3V15M5 5L13 13M13 5L5 13" />
            <QSep />
            <QCell $w={26}>
              <IconSvg $s={20} viewBox="0 0 32 32">{cyl(14, 6, 24, 8, '#c9c9c9', '#eee', '#777')}<rect x={15} y={6} width={5} height={20} fill={O} />{plus(22, 23, 7)}</IconSvg>
            </QCell>
            <QCell $w={25}><Down $w={11} $c="#fff" /></QCell>
            <QSep />
            <Q w={28} d="M7 2H11V10H7ZM4 7C4 13 14 13 14 7M9 12V16M5 16.5H13" />
            <QSep />
            <Q w={28} d="M3 8L10 3L15 6L11 14L5 14ZM6 9L11 6M7 12L12 8" />
            <QSep />
            <Gap $w={6} />
            <Q w={23} d="M4 2H10V5H14V16H7V13H4ZM4 5H10V13M8 8H13M8 10H13M8 12H13" />
            <Q w={24} d="M3 2H15V16H3ZM3 5H15" />
            <QText>窗口</QText>
            <QCell $w={24}><Down $w={11} $c="#fff" /></QCell>
            <QCell $w={20}>
              <IconSvg $s={14} viewBox="0 0 14 14"><path d="M1 1H13V3H1ZM2 6H12L7 13Z" fill="#fff" /></IconSvg>
            </QCell>
          </Quick>
          <Title>NX - 建模</Title>
          <WinArea>
            <Brand>SIEMENS</Brand>
            <WinBtn $w={44}>
              <IconSvg $s={18} viewBox="0 0 18 18"><rect x={3} y={13} width={12} height={3} fill="#fff" /></IconSvg>
            </WinBtn>
            <WinBtn $w={44}>
              <IconSvg $s={18} viewBox="0 0 18 18">{line('M7 5V1.5H16V9H11.5M2 5.5H11.5V16H2ZM2 8H11.5M7 3.5H16', '#fff', 1.6)}</IconSvg>
            </WinBtn>
            <WinBtn $w={50}>
              <IconSvg $s={18} viewBox="0 0 18 18">{line('M2 2L16 16M16 2L2 16', '#fff', 2.6)}</IconSvg>
            </WinBtn>
          </WinArea>
        </TitleBar>
        <MenuBar>
          <FileTab>文件(F)</FileTab>
          <Tab $on>主页</Tab>
          <Tab>曲线</Tab>
          <Tab>曲面</Tab>
          <Tab>装配</Tab>
          <Tab>分析</Tab>
          <Tab>视图</Tab>
          <Tab>选择</Tab>
          <Tab>渲染</Tab>
          <Tab>工具</Tab>
          <Tab $w={143}>应用模块</Tab>
          <SearchBox>
            在此输入以搜索
            <IconSvg $s={25} viewBox="0 0 25 25">
              <circle cx={15} cy={10} r={8} fill="none" stroke="#555" strokeWidth={1.2} />
              <path d="M9 15L2 22L4 24L11 17" fill="#fff" stroke="#555" strokeWidth={1.2} />
            </IconSvg>
          </SearchBox>
          <HelpCell $first>
            <IconSvg $s={18} viewBox="0 0 18 18">{line('M5 1H1V5M13 1H17V5M1 13V17H5M17 13V17H13', '#e8f4f8', 1.2)}</IconSvg>
          </HelpCell>
          <HelpCell>
            <IconSvg $s={18} viewBox="0 0 18 18">{line('M1 13L9 4L17 13', '#e8f4f8', 1.2)}</IconSvg>
          </HelpCell>
          <HelpCell>
            <IconSvg $s={18} viewBox="0 0 18 18">
              <ellipse cx={9} cy={9} rx={7.5} ry={8} fill="none" stroke="#e8f4f8" strokeWidth={1.1} />
              {line('M6.5 7C6.5 3.5 12 3.5 12 7C12 9 9 9 9 11.5M9 13.5V14', '#e8f4f8', 1.1)}
            </IconSvg>
          </HelpCell>
          <HelpCell>
            <IconSvg $s={18} viewBox="0 0 18 18">{line('M9 1V13M9 15.5V16.5', '#e8f4f8', 1.4)}</IconSvg>
          </HelpCell>
          <Gap $w={1} />
        </MenuBar>
      </Header>

      <Ribbon>
        <Group $w={170}>
          <GroupBody $pl={13}>
            <BigBtn w={91} icon="datum" label="基准平面" caret />
            <BigBtn w={45} icon="sketch" label="草图" />
          </GroupBody>
          <Foot name="构造" />
        </Group>
        <Group $w={778}>
          <GroupBody $pl={14}>
            <BigBtn w={44} icon="extrude" label="拉伸" />
            <BigBtn w={45} icon="revolve" label="旋转" />
            <BigBtn w={31} icon="hole" label="孔" />
            <BigBtn w={44} icon="unite" label="合并" />
            <BigBtn w={47} icon="subtract" label="减去" />
            <BigBtn w={68} icon="trim" label="修剪体" caret />
            <BigBtn w={67} icon="blend" label="边倒圆" caret />
            <BigBtn w={67} icon="chamfer" label="倒斜角" />
            <SmallCol>
              <Small icon="draftS" label="拔模" s={24} gap={5} box={26} />
              <Small icon="shellS" label="抽壳" s={24} gap={5} box={28} />
            </SmallCol>
            <SmallCol $ml={-3}>
              <Small icon="patternS" label="阵列特征" s={24} gap={4} />
              <Small icon="mirrorS" label="镜像特征" s={24} gap={4} />
            </SmallCol>
            <More icon="more" />
          </GroupBody>
          <Foot name="基本" />
        </Group>
        <Group $w={412}>
          <GroupBody $pl={13}>
            <BigBtn w={45} icon="move" label="移动" />
            <BigBtn w={46} icon="del" label="删除" />
            <BigBtn w={45} icon="replace" label="替换" />
            <SmallCol>
              <Small icon="offsetS" label="偏置" s={24} gap={4} box={28} />
              <Small icon="resizeS" label="调整圆角大小" s={24} gap={4} box={28} />
            </SmallCol>
            <More icon="refresh" />
          </GroupBody>
          <Foot name="同步建模" />
        </Group>
        {tiny.map(g => (
          <Group key={g.name} $w={g.w}>
            <TinyGrid>
              {g.rows.map((r, i) => (
                <TinyRow key={i}>
                  {r.map((n, j) => (n === null
                    ? <TinySep key={j} />
                    : <TinyCell key={j}><Art set={T} n={n} s={n.startsWith('d') && n.length > 1 ? 24 : 21} box={24} /></TinyCell>))}
                </TinyRow>
              ))}
            </TinyGrid>
            <RightFill />
            <Foot name={g.name} tight={g.tight} />
          </Group>
        ))}
        <Group $grow $noline>
          <RightFill />
          <GroupFoot>
            <GroupName />
            <FootArrow><Down $w={11} /></FootArrow>
          </GroupFoot>
        </Group>
      </Ribbon>

      <FilterBar>
        <Burger />
        <FilterText>菜单(M)</FilterText>
        <QCell $w={22}><Down $w={10} /></QCell>
        <Gap $w={5} />
        <FilterSep />
        <Gap $w={11} />
        <Select $w={286}>无选择过滤器<Down $w={14} /></Select>
        <FIcon $w={35} $dim><IconSvg $s={20} viewBox="0 0 20 20">{line('M3 2H13L10 8V15L7 12V8ZM13 11L17 14L14 17', '#777', 1.1)}</IconSvg></FIcon>
        <Select $w={300}>整个装配<Down $w={14} /></Select>
        <Gap $w={10} />
        <Hz w={20} n="hole" set={L} on />
        <Hz w={26} n="o" dim />
        <Hz w={28} n="k" />
        <QCell $w={16}><Down $w={10} /></QCell>
        <Hz w={26} n="a" dim />
        <Hz w={24} n="trim" set={L} />
        <Hz w={26} n="x" />
        <QCell $w={20}><Down $w={10} /></QCell>
        <Hz w={29} n="b" />
        <Hz w={24} n="c" />
        <Gap $w={6} />
        <FilterSep />
        <TailArrow><Down $w={11} /></TailArrow>
      </FilterBar>

      <Main>
        <LeftStrip>
          {strip.map(({ n, h, on, pb }) => (
            <StripItem key={n} $h={h} $on={on} $pb={pb}>
              <Art set={S} n={n} s={n === 'gear' ? 20 : 26} box={26} />
            </StripItem>
          ))}
          <svg width="0" height="0">
            <defs>
              <linearGradient id="rb" x1="0" y1="0" x2="0" y2="1">
                <stop offset="0" stopColor="#f02020" />
                <stop offset=".3" stopColor="#f0e020" />
                <stop offset=".6" stopColor="#20d040" />
                <stop offset="1" stopColor="#2020e0" />
              </linearGradient>
            </defs>
          </svg>
        </LeftStrip>

        <Panel>
          <PanelHead>部件导航器<MaxBtn /></PanelHead>
          <Table>
            <ColHead>
              <HeadCell $pl={7}>名称<UpTri /></HeadCell>
              <HeadCell $pl={7}>当..</HeadCell>
              <HeadCell $pl={7}>最..</HeadCell>
              <HeadCell $pl={7}>附注</HeadCell>
            </ColHead>
            <TBody>
              <RowsCol>
                {rows.map((r, i) => (
                  <Row key={r.t} $alt={i % 2 === 0}>
                    <NameCell $hid={r.h} $bold={r.b} $last={i === rows.length - 1}>
                      <EyeSvg viewBox="0 0 16 16">{eye(r.h)}</EyeSvg>
                      <RowIcon><Art set={R} n={r.i} s={18} box={18} /></RowIcon>
                      {r.t}
                    </NameCell>
                    <MidCell>
                      {r.b && (
                        <IconSvg $s={14} viewBox="0 0 14 14">
                          {line('M4 1H10V4H4ZM4 11H10V14H4ZM2 2V12', '#555', 0.9)}
                          <rect x={5} y={5} width={7} height={5} fill={O} />
                        </IconSvg>
                      )}
                    </MidCell>
                    <MidCell><Tick /></MidCell>
                  </Row>
                ))}
                <BlankRow><i /><i /><i /></BlankRow>
              </RowsCol>
              <VTrack><VThumb /></VTrack>
            </TBody>
            <HTrack><HThumb /></HTrack>
          </Table>
          <Splitter />
          <Section><Chevron />搜索</Section>
          <Section><Chevron />相关性</Section>
          <Section><Chevron />细节</Section>
          <Section><Chevron />预览</Section>
        </Panel>

        <Center>
          <DocBar>
            <DocTab>
              <IconSvg $s={14} viewBox="0 0 26 26">{S.part}</IconSvg>
              建模练习_1_勺子_20221217.prt
              <DocClose>×</DocClose>
            </DocTab>
          </DocBar>
          <Canvas viewBox="582 327 1942 980" preserveAspectRatio="xMinYMin slice">
            <defs>
              <clipPath id="innerClip"><path d={smooth(INNER)} /></clipPath>
              <filter id="soft" x="-30%" y="-100%" width="160%" height="300%"><feGaussianBlur stdDeviation="9" /></filter>
              <filter id="soft2" x="-40%" y="-80%" width="180%" height="260%"><feGaussianBlur stdDeviation="20" /></filter>
            </defs>
            <path d={smooth(OUTER)} fill="#ffff00" stroke="#444" strokeWidth={1.4} />
            <g clipPath="url(#innerClip)">
              <path d={smooth(INNER)} fill="#ffff0a" />
              <polygon points="760,664 1226,694 1340,688 1480,645 1480,672 1340,712 1226,722 1000,700 760,684" fill="#b4b400" filter="url(#soft)" opacity={0.8} />
              <ellipse cx={772} cy={712} rx={14} ry={24} fill="#c0c000" filter="url(#soft)" opacity={0.55} />
              <polygon points="1400,700 1510,655 1660,610 1668,695 1540,708 1440,750" fill="#c0c000" filter="url(#soft2)" opacity={0.8} />
              <ellipse cx={1615} cy={695} rx={55} ry={14} fill="#a0a000" filter="url(#soft)" opacity={0.6} />
              <ellipse cx={1685} cy={668} rx={34} ry={34} fill="#cccc00" filter="url(#soft2)" opacity={0.7} />
              <ellipse cx={1898} cy={745} rx={14} ry={60} fill="#dcdc00" filter="url(#soft2)" opacity={0.7} />
              <ellipse cx={1790} cy={860} rx={50} ry={10} fill="#e8e800" filter="url(#soft2)" opacity={0.45} transform="rotate(-35 1790 860)" />
            </g>
            <path d={smooth(INNER)} fill="none" stroke="#333" strokeWidth={1.1} />
            <path d={smooth(PAD)} fill="#ffff0a" stroke="#333" strokeWidth={1.1} />
            <path d={smooth(PAD2)} fill="#ffff00" stroke="#333" strokeWidth={1.1} />
            <g fill="none" stroke="#333" strokeWidth={1}>
              <path d={openCurve([[1124, 704], [1112, 740], [1109, 767], [1113, 793], [1136, 814]])} />
              <path d={openCurve([[1661, 653], [1608, 657], [1531, 677], [1455, 713], [1340, 768], [1320, 797], [1340, 827], [1378, 843], [1493, 870], [1608, 893], [1686, 887]])} />
              <path d="M1660 597L1665 703M1683 869L1691 904M1226 706V712M1239 827V832M1510 642V646M1537 890V895M1123 698V704" />
            </g>
            {/* triad */}
            <g>
              <polygon points="665,1172 707,1168 712,1223 669,1227" fill="#fff" stroke="#bbb" strokeWidth={1} />
              <path d="M667 1211L711 1207" stroke="#bbb" />
              <path d="M684 1170L682 1148" stroke="#3a9a3a" strokeWidth={5} />
              <polygon points="682,1130 687,1150 677,1150" fill="#2f9e3f" />
              <path d="M710 1195L742 1192" stroke="#d83030" strokeWidth={6} />
              <polygon points="760,1191 740,1186 742,1198" fill="#d83030" />
              <path d="M688 1192V1176" stroke="#0a2a9c" strokeWidth={5} strokeLinecap="round" />
              <polygon points="688,1168 694,1180 688,1184 682,1180" fill="#0a2a9c" />
              <g fontFamily="Liberation Sans, sans-serif" fontSize={11}>
                <text x={676} y={1127} fill="#3a9a3a">Y</text>
                <text x={685} y={1168} fill="#2040e0">Z</text>
                <text x={766} y={1195} fill="#d83030">X</text>
              </g>
            </g>
          </Canvas>
        </Center>

        <RightStrip>
          {right.map((n, i) => (
            <RightItem key={i}><Art set={S} n={n} s={24} box={26} /></RightItem>
          ))}
          <RightRule />
          <RightFill />
          <LeftTri />
        </RightStrip>
      </Main>
      <Status>UG爱好者论坛@1xwgjh</Status>
    </Page>
  );
}
